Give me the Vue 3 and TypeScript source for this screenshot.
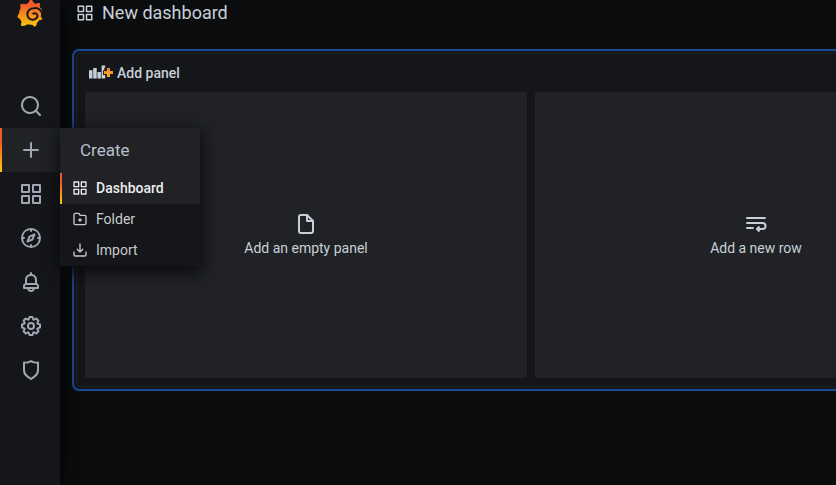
<script setup lang="ts">
interface NavItem {
  name: string
  icon: string
  active?: boolean
}

const icons: Record<string, string> = {
  search: 'M21.71,20.29,18,16.61A9,9,0,1,0,16.61,18l3.68,3.68a1,1,0,0,0,1.42,0A1,1,0,0,0,21.71,20.29ZM11,18a7,7,0,1,1,7-7A7,7,0,0,1,11,18Z',
  plus: 'M19,11H13V5a1,1,0,0,0-2,0v6H5a1,1,0,0,0,0,2h6v6a1,1,0,0,0,2,0V13h6a1,1,0,0,0,0-2Z',
  apps: 'M10,13H3a1,1,0,0,0-1,1v7a1,1,0,0,0,1,1h7a1,1,0,0,0,1-1V14A1,1,0,0,0,10,13ZM9,20H4V15H9ZM21,2H14a1,1,0,0,0-1,1v7a1,1,0,0,0,1,1h7a1,1,0,0,0,1-1V3A1,1,0,0,0,21,2ZM20,9H15V4h5Zm1,4H14a1,1,0,0,0-1,1v7a1,1,0,0,0,1,1h7a1,1,0,0,0,1-1V14A1,1,0,0,0,21,13Zm-1,7H15V15h5ZM10,2H3A1,1,0,0,0,2,3v7a1,1,0,0,0,1,1h7a1,1,0,0,0,1-1V3A1,1,0,0,0,10,2ZM9,9H4V4H9Z',
  compass: 'M12,2A10,10,0,1,0,22,12,10,10,0,0,0,12,2Zm1,17.93V19a1,1,0,0,0-2,0v.93A8,8,0,0,1,4.07,13H5a1,1,0,0,0,0-2H4.07A8,8,0,0,1,11,4.07V5a1,1,0,0,0,2,0V4.07A8,8,0,0,1,19.93,11H19a1,1,0,0,0,0,2h.93A8,8,0,0,1,13,19.93ZM15.14,7.55l-5,2.12a1,1,0,0,0-.52.52l-2.12,5a1,1,0,0,0,.21,1.1,1,1,0,0,0,.7.3.93.93,0,0,0,.4-.09l5-2.12a1,1,0,0,0,.52-.52l2.12-5a1,1,0,0,0-1.31-1.31Zm-2.49,5.1-2.28,1,1-2.28,2.28-1Z',
  bell: 'M18,13.18V10a6,6,0,0,0-5-5.91V3a1,1,0,0,0-2,0V4.09A6,6,0,0,0,6,10v3.18A3,3,0,0,0,4,16v2a1,1,0,0,0,1,1H8.14a4,4,0,0,0,7.72,0H19a1,1,0,0,0,1-1V16A3,3,0,0,0,18,13.18ZM8,10a4,4,0,0,1,8,0v3H8Zm4,10a2,2,0,0,1-1.72-1h3.44A2,2,0,0,1,12,20Zm6-3H6V16a1,1,0,0,1,1-1H17a1,1,0,0,1,1,1Z',
  cog: 'M21.32,9.55l-1.89-.63.89-1.78A1,1,0,0,0,20.13,6L18,3.87a1,1,0,0,0-1.15-.19l-1.78.89-.63-1.89A1,1,0,0,0,13.5,2h-3a1,1,0,0,0-.95.68L8.92,4.57,7.14,3.68A1,1,0,0,0,6,3.87L3.87,6a1,1,0,0,0-.19,1.15l.89,1.78-1.89.63A1,1,0,0,0,2,10.5v3a1,1,0,0,0,.68.95l1.89.63-.89,1.78A1,1,0,0,0,3.87,18L6,20.13a1,1,0,0,0,1.15.19l1.78-.89.63,1.89a1,1,0,0,0,.95.68h3a1,1,0,0,0,.95-.68l.63-1.89,1.78.89A1,1,0,0,0,18,20.13L20.13,18a1,1,0,0,0,.19-1.15l-.89-1.78,1.89-.63A1,1,0,0,0,22,13.5v-3A1,1,0,0,0,21.32,9.55ZM20,12.78l-1.2.4A2,2,0,0,0,17.64,16l.57,1.14-1.1,1.1L16,17.64a2,2,0,0,0-2.79,1.16l-.4,1.2H11.22l-.4-1.2A2,2,0,0,0,8,17.64l-1.14.57-1.1-1.1L6.36,16A2,2,0,0,0,5.2,13.18L4,12.78V11.22l1.2-.4A2,2,0,0,0,6.36,8L5.79,6.89l1.1-1.1L8,6.36A2,2,0,0,0,10.82,5.2l.4-1.2h1.56l.4,1.2A2,2,0,0,0,16,6.36l1.14-.57,1.1,1.1L17.64,8a2,2,0,0,0,1.16,2.79l1.2.4ZM12,8a4,4,0,1,0,4,4A4,4,0,0,0,12,8Zm0,6a2,2,0,1,1,2-2A2,2,0,0,1,12,14Z',
  shield: 'M19.63,3.65a1,1,0,0,0-.84-.2,8,8,0,0,1-6.22-1.27,1,1,0,0,0-1.14,0A8,8,0,0,1,5.21,3.45a1,1,0,0,0-.84.2A1,1,0,0,0,4,4.43v7.45a9,9,0,0,0,3.77,7.33l3.65,2.6a1,1,0,0,0,1.16,0l3.65-2.6A9,9,0,0,0,20,11.88V4.43A1,1,0,0,0,19.63,3.65ZM18,11.88a7,7,0,0,1-2.93,5.7L12,19.77,8.93,17.58A7,7,0,0,1,6,11.88V5.58a10,10,0,0,0,6-1.39,10,10,0,0,0,6,1.39Z',
  folderPlus: 'M14,12.5H13v-1a1,1,0,0,0-2,0v1H10a1,1,0,0,0,0,2h1v1a1,1,0,0,0,2,0v-1h1a1,1,0,0,0,0-2Zm5-7H12.72l-.32-1a3,3,0,0,0-2.84-2H5a3,3,0,0,0-3,3v13a3,3,0,0,0,3,3H19a3,3,0,0,0,3-3V8.5A3,3,0,0,0,19,5.5Zm1,13a1,1,0,0,1-1,1H5a1,1,0,0,1-1-1V5.5a1,1,0,0,1,1-1H9.56a1,1,0,0,1,.95.68l.54,1.64A1,1,0,0,0,12,7.5h7a1,1,0,0,1,1,1Z',
  import: 'M21,14a1,1,0,0,0-1,1v4a1,1,0,0,1-1,1H5a1,1,0,0,1-1-1V15a1,1,0,0,0-2,0v4a3,3,0,0,0,3,3H19a3,3,0,0,0,3-3V15A1,1,0,0,0,21,14Zm-9.71,1.71a1,1,0,0,0,.33.21.94.94,0,0,0,.76,0,1,1,0,0,0,.33-.21l4-4a1,1,0,0,0-1.42-1.42L13,12.59V3a1,1,0,0,0-2,0v9.59l-2.29-2.3a1,1,0,1,0-1.42,1.42Z',
  file: 'M20,8.94a1.31,1.31,0,0,0-.06-.27l0-.09a1.07,1.07,0,0,0-.19-.28h0l-6-6h0a1.07,1.07,0,0,0-.28-.19.32.32,0,0,0-.09,0A.88.88,0,0,0,13.05,2H7A3,3,0,0,0,4,5V19a3,3,0,0,0,3,3H17a3,3,0,0,0,3-3V9S20,9,20,8.94ZM14,5.41,16.59,8H14ZM18,19a1,1,0,0,1-1,1H7a1,1,0,0,1-1-1V5A1,1,0,0,1,7,4h5V9a1,1,0,0,0,1,1h5Z',
  wrap: 'M3,7H21a1,1,0,0,0,0-2H3A1,1,0,0,0,3,7Zm0,10H9a1,1,0,0,0,0-2H3a1,1,0,0,0,0,2ZM18.5,10H3a1,1,0,0,0,0,2H18.5a1.5,1.5,0,0,1,0,4H15.4l.3-.3a1,1,0,0,0-1.4-1.4l-2,2a1,1,0,0,0,0,1.4l2,2a1,1,0,0,0,1.4-1.4l-.3-.3h3.1a3.5,3.5,0,0,0,0-8Z',
}

const navItems: NavItem[] = [
  { name: 'search', icon: 'search' },
  { name: 'create', icon: 'plus', active: true },
  { name: 'dashboards', icon: 'apps' },
  { name: 'explore', icon: 'compass' },
  { name: 'alerting', icon: 'bell' },
  { name: 'configuration', icon: 'cog' },
  { name: 'admin', icon: 'shield' },
]

const menuItems: NavItem[] = [
  { name: 'Dashboard', icon: 'apps', active: true },
  { name: 'Folder', icon: 'folderPlus' },
  { name: 'Import', icon: 'import' },
]

const tiles: NavItem[] = [
  { name: 'Add an empty panel', icon: 'file' },
  { name: 'Add a new row', icon: 'wrap' },
]
</script>

<template>
  <div class="app">
    <nav class="sidebar">
      <div class="brand">
        <svg class="logo" viewBox="0 0 78 84">
          <defs>
            <linearGradient id="flame" gradientUnits="userSpaceOnUse" x1="0" y1="90" x2="0" y2="14">
              <stop offset="0" stop-color="#fddc08" />
              <stop offset="1" stop-color="#f05a28" />
            </linearGradient>
          </defs>
          <path
            fill="url(#flame)"
            d="M10 13Q18 10 27 13Q33 10 35 7Q37 1 42-2Q48 1 50 8Q53 9 57 11Q61 8 68 9Q70 14 68 20Q76 27 77 38L74 39Q73 45 71 49Q74 52 76 58Q72 61 66 61Q64 66 60 68Q60 75 54 80Q49 78 46 74Q39 75 32 73Q24 79 13 78Q11 72 14 65Q11 62 9 57Q5 56 1 51Q3 44 7 40Q6 37 8 30Q9 28 11 25Q9 20 10 13Z"
          />
          <path
            class="groove"
            d="M76 42C72 29 62 23 52 24C39 25 31 33 31 43C31 54 40 60 49 59C58 58 63 51 61 45C59 40 53 38 49 41"
          />
        </svg>
      </div>
      <div class="nav-list">
        <div v-for="item in navItems" :key="item.name" class="nav-item" :class="{ active: item.active }">
          <svg class="icon" viewBox="0 0 24 24"><path :d="icons[item.icon]" /></svg>
          <div v-if="item.active" class="menu">
            <div class="menu-title">Create</div>
            <div v-for="entry in menuItems" :key="entry.name" class="menu-item" :class="{ selected: entry.active }">
              <svg class="menu-icon" viewBox="0 0 24 24"><path :d="icons[entry.icon]" /></svg>
              <span>{{ entry.name }}</span>
            </div>
          </div>
        </div>
      </div>
    </nav>

    <main class="content">
      <header class="page-header">
        <svg class="header-icon" viewBox="0 0 24 24"><path :d="icons.apps" /></svg>
        <h1>New dashboard</h1>
      </header>
      <section class="panel">
        <div class="panel-title">
          <svg class="panel-icon" viewBox="0 0 24 14">
            <defs>
              <linearGradient id="spark" x1="0" y1="0" x2="0" y2="1">
                <stop offset="0" stop-color="#f2802b" />
                <stop offset="1" stop-color="#fbb01e" />
              </linearGradient>
            </defs>
            <path class="bars" d="M0 4.300h3.500v8.200H0zM4.200 2h3.500v10.500H4.200zM8.400 6h3.500v6.500H8.400zM12.600-.5h3.600v2.300h-.9v2.400h-1.300v4.700h2.200v3.600h-3.600z" />
            <path d="M17.900 2h3.100v3h3v3.100h-3v2.900h-3.100V8.100h-3V5h3z" fill="url(#spark)" />
          </svg>
          <span>Add panel</span>
        </div>
        <div class="tiles">
          <div v-for="tile in tiles" :key="tile.name" class="tile">
            <svg class="icon" viewBox="0 0 24 24"><path :d="icons[tile.icon]" /></svg>
            <span>{{ tile.name }}</span>
          </div>
        </div>
      </section>
    </main>
  </div>
</template>

<style>
body {
  background: #0b0c0e;
  overflow: hidden;
}
</style>

<style scoped>
* {
  box-sizing: border-box;
}
.app {
  display: flex;
  width: 100vw;
  height: 100vh;
  overflow: hidden;
  background: #0b0c0e;
  color: #c7d0d9;
  font-family: Roboto, "Liberation Sans", sans-serif;
  font-size: 14px;
  line-height: 20px;
}
svg {
  display: block;
  flex: none;
  overflow: visible;
  fill: currentColor;
}
.sidebar {
  position: relative;
  z-index: 2;
  flex: none;
  width: 60px;
  background: #141619;
  box-shadow: 0 0 20px #000;
}
.brand {
  display: flex;
  justify-content: center;
  height: 84px;
}
.logo {
  width: 26px;
  height: 28px;
}
.groove {
  fill: none;
  stroke: #141619;
  stroke-width: 6;
  stroke-linecap: round;
}
.nav-item {
  position: relative;
  display: flex;
  align-items: center;
  height: 44px;
  padding-left: 19px;
  color: #9fa7b3;
}
.nav-item.active {
  background: #202226;
}
.nav-item.active::before,
.menu-item.selected::before {
  content: "";
  position: absolute;
  left: 0;
  top: 0;
  bottom: 0;
  width: 2px;
  background: linear-gradient(#f05a28 30%, #fbca0a 99%);
}
.icon {
  width: 24px;
  height: 24px;
}
.menu {
  position: absolute;
  left: 60px;
  top: 0;
  width: 140px;
  background: #141619;
  box-shadow: 0 5px 14px 2px #0b0c0e;
}
.menu-title {
  height: 45px;
  padding: 0 20px;
  background: #202226;
  color: #b9c1ca;
  font-size: 17px;
  line-height: 45px;
}
.menu-item {
  position: relative;
  display: flex;
  align-items: center;
  gap: 8px;
  height: 31px;
  padding: 0 0 1px 12px;
  color: #c9cacc;
}
.menu-item.selected {
  background: #202226;
  color: #ececec;
  font-weight: 500;
}
.menu-icon {
  width: 16px;
  height: 16px;
}
.content {
  flex: 1;
  min-width: 0;
  padding-left: 16px;
}
.page-header {
  display: flex;
  align-items: center;
  gap: 8px;
  height: 26px;
  margin-bottom: 27px;
}
.header-icon {
  width: 18px;
  height: 18px;
}
h1 {
  margin: 0;
  font-size: 18px;
  font-weight: 400;
  line-height: 26px;
}
.panel {
  width: 910px;
  height: 334px;
  padding: 0 8px 8px;
  background: #141619;
  border: 1px solid #202226;
  border-radius: 3px;
  box-shadow: 0 0 0 2px #141619, 0 0 0 4px #184a96;
}
.panel-title {
  display: flex;
  align-items: center;
  gap: 4px;
  height: 38px;
  padding-left: 4px;
  font-weight: 500;
}
.panel-icon {
  width: 24px;
  height: 14px;
}
.bars {
  fill: #c7d0d9;
}
.tiles {
  display: grid;
  grid-template-columns: 1fr 1fr;
  gap: 8px;
  height: 286px;
}
.tile {
  display: flex;
  flex-direction: column;
  align-items: center;
  justify-content: center;
  gap: 2px;
  border-radius: 2px;
  background: #202226;
}
</style>
